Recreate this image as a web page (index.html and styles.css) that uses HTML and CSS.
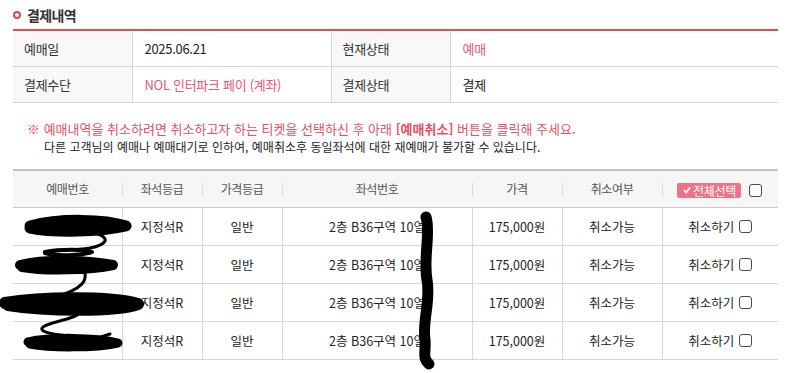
FILE: index.html
```html
<!DOCTYPE html>
<html lang="ko">
<head>
<meta charset="utf-8">
<link rel="stylesheet" href="styles.css">
</head>
<body>
<div class="page">
  <h2 class="title"><span class="ring"></span>결제내역</h2>
  <table class="info">
    <colgroup><col class="c1"><col class="c2"><col class="c3"><col class="c4"></colgroup>
    <tr><th>예매일</th><td>2025.06.21</td><th>현재상태</th><td class="pink">예매</td></tr>
    <tr><th>결제수단</th><td class="pink">NOL 인터파크 페이 (계좌)</td><th>결제상태</th><td>결제</td></tr>
  </table>
  <div class="notice">
    <p class="n1">※ 예매내역을 취소하려면 취소하고자 하는 티켓을 선택하신 후 아래 <b>[예매취소]</b> 버튼을 클릭해 주세요.</p>
    <p class="n2">다른 고객님의 예매나 예매대기로 인하여, 예매취소후 동일좌석에 대한 재예매가 불가할 수 있습니다.</p>
  </div>
  <table class="list">
    <colgroup><col class="k1"><col class="k2"><col class="k3"><col class="k4"><col class="k5"><col class="k6"><col class="k7"></colgroup>
    <thead>
      <tr>
        <th>예매번호</th>
        <th>좌석등급</th>
        <th>가격등급</th>
        <th>좌석번호</th>
        <th>가격</th>
        <th>취소여부</th>
        <th><span class="all"><span class="btn"><svg class="chk" viewBox="0 0 10 10" width="8" height="8"><path d="M1.2 5.2 L4 8 L8.8 1.8" fill="none" stroke="#fff" stroke-width="2.2"/></svg>전체선택</span><span class="box"></span></span></th>
      </tr>
    </thead>
    <tbody>
      <tr><td></td><td>지정석R</td><td>일반</td><td>2층 B36구역 10열</td><td>175,000원</td><td>취소가능</td><td><span class="act">취소하기<span class="box"></span></span></td></tr>
      <tr><td></td><td>지정석R</td><td>일반</td><td>2층 B36구역 10열</td><td>175,000원</td><td>취소가능</td><td><span class="act">취소하기<span class="box"></span></span></td></tr>
      <tr><td></td><td>지정석R</td><td>일반</td><td>2층 B36구역 10열</td><td>175,000원</td><td>취소가능</td><td><span class="act">취소하기<span class="box"></span></span></td></tr>
      <tr><td></td><td>지정석R</td><td>일반</td><td>2층 B36구역 10열</td><td>175,000원</td><td>취소가능</td><td><span class="act">취소하기<span class="box"></span></span></td></tr>
    </tbody>
  </table>
</div>
<svg class="scribble" width="789" height="373" viewBox="0 0 789 373">
  <g fill="none" stroke="#000" stroke-linecap="round" stroke-linejoin="round">
    <path d="M30 226 C60 218, 105 219, 126 226 C100 232, 55 233, 30 228" stroke-width="11"/>
    <path d="M55 221 L62 218" stroke-width="5"/>
    <path d="M95 233 C112 238, 106 245, 90 248 C70 251, 48 250, 47 253" stroke-width="3"/>
    <path d="M45 252 C60 249, 85 249, 92 252 C80 256, 55 256, 45 253" stroke-width="4"/>
    <path d="M20 265 C45 259, 90 260, 113 265 C90 270, 45 271, 22 267" stroke-width="10"/>
    <path d="M84 271 C88 280, 83 289, 55 297" stroke-width="3"/>
    <path d="M5 303 C40 297, 110 296, 138 304 C115 312, 45 311, 8 305" stroke-width="12"/>
    <path d="M80 312 C76 320, 46 322, 42 328 C40 333, 58 335, 70 336" stroke-width="3"/>
    <path d="M28 342 C50 337, 95 337, 118 343 C95 348, 50 348, 30 344" stroke-width="9"/>
    <path d="M95 339 L110 334" stroke-width="3"/>
    <path d="M426 217 C431 232, 423 258, 427 280 C431 300, 422 322, 425 340 C426 352, 422 358, 429 364" stroke-width="11"/>
  </g>
</svg>
</body>
</html>
```

FILE: styles.css
```css
* { box-sizing: border-box; }
html, body { margin: 0; padding: 0; background: #fff; }
body {
  font-family: "Noto Sans CJK KR", "Noto Sans", sans-serif;
  color: #222;
  position: relative;
  width: 789px;
  height: 373px;
  overflow: hidden;
}
.page { padding: 0 11px 0 13px; }
.title {
  margin: 0;
  height: 29px;
  display: flex;
  align-items: center;
  gap: 6px;
  font-size: 14px;
  font-weight: 700;
  letter-spacing: -0.6px;
  color: #333;
}
.ring {
  width: 8px; height: 8px;
  border: 2px solid #d9484a;
  border-radius: 50%;
  display: inline-block;
}
table { border-collapse: collapse; table-layout: fixed; width: 765px; }
.info { border-top: 2px solid #d9534f; }
.info .c1 { width: 119px; } .info .c2 { width: 199px; }
.info .c3 { width: 119px; } .info .c4 { width: 328px; }
.info th, .info td {
  height: 36px;
  border-bottom: 1px solid #d6d6d6;
  border-right: 1px solid #d6d6d6;
  font-size: 13px;
  font-weight: 400;
  text-align: left;
  letter-spacing: -0.3px;
}
.info th { background: #f8f8f8; color: #333; padding: 0 0 0 11px; }
.info td { padding: 0 0 0 12px; color: #222; }
.info td:last-child { border-right: 0; }
.info .pink { color: #e6586f; }
.notice { padding: 17px 0 14px; }
.notice p { margin: 0; white-space: nowrap; }
.n1 { font-size: 13px; color: #e8505f; padding-left: 14px; height: 18px; line-height: 18px; letter-spacing: 0; }
.n1 b { font-weight: 700; }
.n2 { font-size: 12px; color: #222; padding-left: 31px; height: 17px; line-height: 17px; letter-spacing: 0; }
.list { border-top: 2px solid #c4c4c4; }
.list .k1 { width: 109px; } .list .k2 { width: 80px; } .list .k3 { width: 80px; }
.list .k4 { width: 190px; } .list .k5 { width: 90px; } .list .k6 { width: 100px; }
.list .k7 { width: 116px; }
.list thead th {
  background: #f6f6f6;
  height: 38px;
  font-size: 12px;
  font-weight: 400;
  color: #555;
  letter-spacing: -0.4px;
  border-bottom: 1px solid #c8c8c8;
  padding: 0;
  position: relative;
}
.list thead th + th::before {
  content: "";
  position: absolute;
  left: 0; top: 12px;
  width: 1px; height: 14px;
  background: #dcdcdc;
}
.list tbody td {
  height: 38px;
  border-bottom: 1px solid #d6d6d6;
  border-right: 1px solid #d6d6d6;
  text-align: center;
  font-size: 12.5px;
  color: #222;
  padding: 0;
  letter-spacing: 0;
}
.list tbody td:last-child { border-right: 0; }
.all { display: inline-flex; align-items: center; gap: 8px; margin-right: 1px; }
.btn {
  display: inline-flex; align-items: center; gap: 2px;
  background: #ef7186;
  color: #fff;
  height: 15px;
  padding: 0 5px 0 6px;
  border-radius: 2px;
  font-size: 12px;
  letter-spacing: -0.3px;
  line-height: 15px;
}
.chk { display: block; }
.box {
  display: inline-block;
  width: 13px; height: 13px;
  border: 1px solid #4a4a4a;
  border-radius: 3px;
  background: #fff;
}
.act { display: inline-flex; align-items: center; gap: 5px; }
.scribble { position: absolute; left: 0; top: 0; pointer-events: none; }
```
